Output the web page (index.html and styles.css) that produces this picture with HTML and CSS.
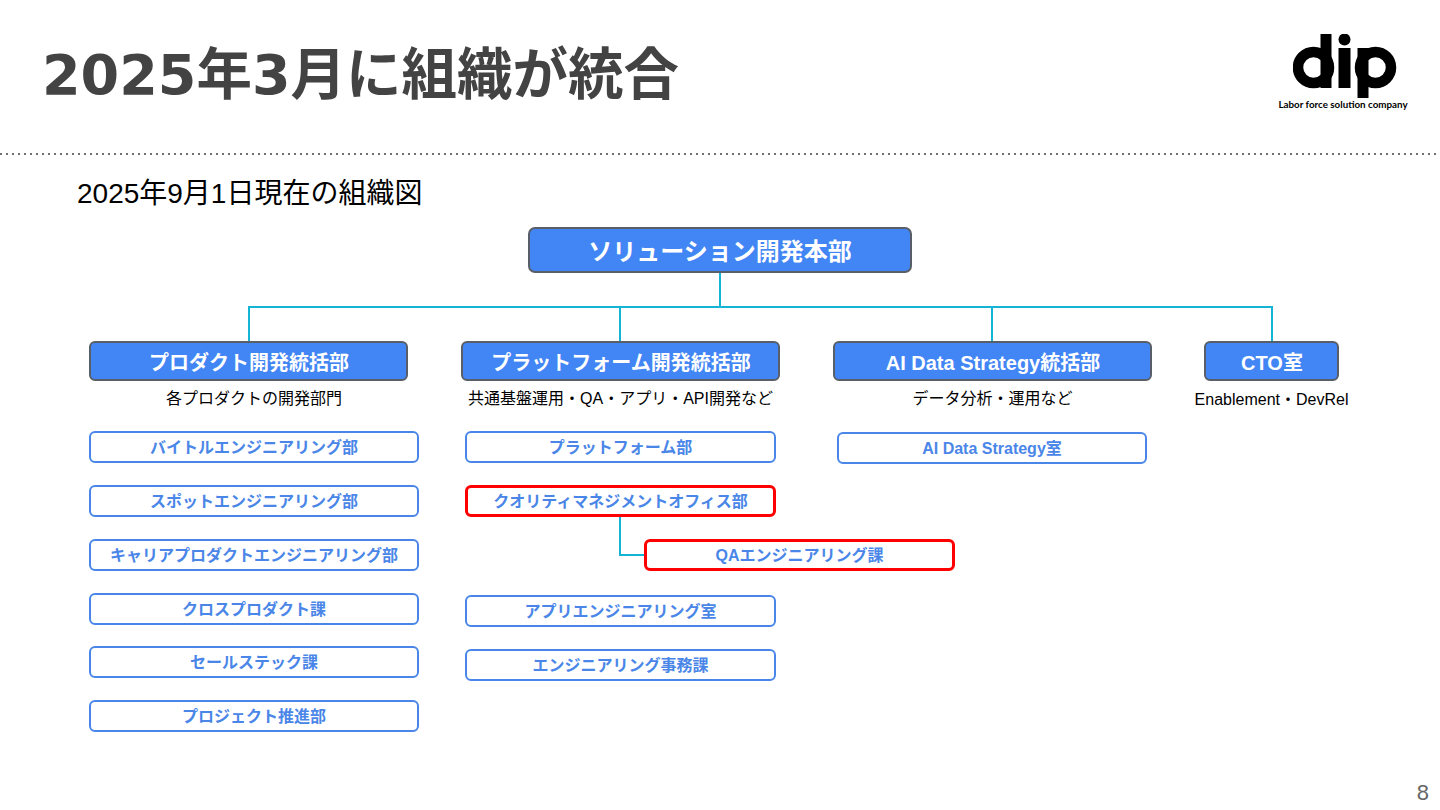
FILE: index.html
```html
<!DOCTYPE html>
<html lang="ja">
<head>
<meta charset="utf-8">
<title>2025年3月に組織が統合</title>
<link rel="stylesheet" href="styles.css">
</head>
<body>
<div class="slide">
  <header class="header">
    <h1 class="title">2025年3月に組織が統合</h1>
    <div class="logo">
      <svg class="logo-mark" width="104" height="64" viewBox="0 0 104 64" aria-hidden="true">
        <circle cx="20.5" cy="33.5" r="15.5" fill="none" stroke="#000" stroke-width="10.5"/>
        <rect x="27.5" y="0" width="11" height="54" fill="#000"/>
        <rect x="45.5" y="14" width="12" height="40" fill="#000"/>
        <circle cx="51.5" cy="5.5" r="6" fill="#000"/>
        <circle cx="82.5" cy="33.5" r="15.5" fill="none" stroke="#000" stroke-width="10.5"/>
        <rect x="64.5" y="14" width="11" height="50" fill="#000"/>
      </svg>
      <div class="tagline">Labor force solution company</div>
    </div>
  </header>
  <p class="subtitle">2025年9月1日現在の組織図</p>
  <main class="chart">
    <svg class="wires" width="1440" height="810" viewBox="0 0 1440 810" aria-hidden="true">
      <path d="M720 273V307M249 342V307H1272V342M620 307V342M992 307V342M620 517V555H646" fill="none" stroke="#14b4d4" stroke-width="2"/>
    </svg>
    <div class="root">ソリューション開発本部</div>
    <div class="columns">
      <section class="col col-a">
        <div class="head">プロダクト開発統括部</div>
        <p class="desc">各プロダクトの開発部門</p>
        <div class="list">
          <div class="unit">バイトルエンジニアリング部</div>
          <div class="unit">スポットエンジニアリング部</div>
          <div class="unit">キャリアプロダクトエンジニアリング部</div>
          <div class="unit">クロスプロダクト課</div>
          <div class="unit unit-tight">セールステック課</div>
          <div class="unit">プロジェクト推進部</div>
        </div>
      </section>
      <section class="col col-b">
        <div class="head">プラットフォーム開発統括部</div>
        <p class="desc">共通基盤運用・QA・アプリ・API開発など</p>
        <div class="list">
          <div class="unit">プラットフォーム部</div>
          <div class="unit unit-red">クオリティマネジメントオフィス部</div>
          <div class="unit unit-red unit-child">QAエンジニアリング課</div>
          <div class="unit unit-after">アプリエンジニアリング室</div>
          <div class="unit">エンジニアリング事務課</div>
        </div>
      </section>
      <section class="col col-c">
        <div class="head">AI Data Strategy統括部</div>
        <p class="desc">データ分析・運用など</p>
        <div class="list">
          <div class="unit">AI Data Strategy室</div>
        </div>
      </section>
      <section class="col col-d">
        <div class="head">CTO室</div>
        <p class="desc desc-wide">Enablement・DevRel</p>
      </section>
    </div>
  </main>
  <div class="page">8</div>
</div>
</body>
</html>
```
FILE: styles.css
```css
* { box-sizing: border-box; }
html, body { margin: 0; padding: 0; background: #fff; }
body { font-family: "Liberation Sans", "Noto Sans CJK JP", sans-serif; }
.slide { position: relative; width: 1440px; height: 810px; overflow: hidden; background: #fff; }

.header {
  display: flex;
  justify-content: space-between;
  height: 155px;
  padding: 0 32px 0 42px;
  background-image: repeating-linear-gradient(to right, #707070 0 2px, transparent 2px 6px);
  background-size: 100% 2px;
  background-position: 0 153px;
  background-repeat: no-repeat;
}
.title {
  margin: 39px 0 0;
  font: 700 55.5px/72px "DejaVu Sans", "Noto Sans CJK JP", sans-serif;
  color: #434343;
}
.logo { display: flex; flex-direction: column; align-items: center; width: 130px; padding-top: 34px; }
.logo-mark { display: block; flex: none; align-self: flex-start; margin-left: 15px; }
.tagline {
  margin-top: 1px;
  font: 700 9.8px/11px "Lato", sans-serif;
  color: #000;
  white-space: nowrap;
}

.subtitle { margin: 23px 0 0 77px; font-size: 28px; line-height: 32px; color: #000; }

.chart { position: absolute; left: 0; top: 227px; width: 1440px; height: 560px; }
.wires { position: absolute; left: 0; top: -227px; pointer-events: none; }
.root, .head {
  position: relative;
  display: flex;
  align-items: center;
  justify-content: center;
  background: #4285f4;
  border: 2px solid #595f69;
  color: #fff;
  font-weight: 700;
  white-space: nowrap;
}
.root {
  width: 384px;
  height: 46px;
  margin-left: 528px;
  padding-bottom: 2px;
  border-radius: 7px;
  font-size: 24px;
}
.columns { display: flex; margin: 68px 0 0 89px; }
.col { position: relative; flex: none; }
.col-a { width: 372px; }
.col-b { width: 372px; }
.col-c { width: 371px; }
.col-d { width: 135px; }
.head { height: 40px; padding-left: 1px; border-radius: 6px; font-size: 20px; }
.col-a .head, .col-b .head, .col-c .head { width: 319px; }
.col-d .head { width: 135px; }
.desc {
  margin: 8px 0 0;
  text-align: center;
  font-size: 16px;
  line-height: 20px;
  color: #000;
  white-space: nowrap;
}
.col-a .desc { width: 330px; }
.col-b .desc, .col-c .desc { width: 319px; }
.desc-wide { width: 135px; margin-top: 9px; display: flex; justify-content: center; }

.list { display: flex; flex-direction: column; gap: 22px; margin-top: 22px; }
.col-a .list { width: 330px; }
.col-b .list { width: 311px; margin-left: 4px; }
.col-c .list { width: 310px; margin-left: 4px; margin-top: 23px; }
.unit {
  position: relative;
  display: flex;
  align-items: center;
  justify-content: center;
  flex: none;
  height: 32px;
  padding-bottom: 2px;
  background: #fff;
  border: 2px solid #4a86e8;
  border-radius: 6px;
  color: #4a86e8;
  font-size: 16px;
  font-weight: 700;
  white-space: nowrap;
}
.unit-red { border: 3px solid #f00; }
.unit-child { align-self: flex-start; width: 311px; margin-left: 179px; }
.unit-after { margin-top: 2px; }
.unit-tight { margin-top: -1px; }

.page { position: absolute; right: 11px; bottom: 6px; font-size: 22px; line-height: 22px; color: #666; }
```
